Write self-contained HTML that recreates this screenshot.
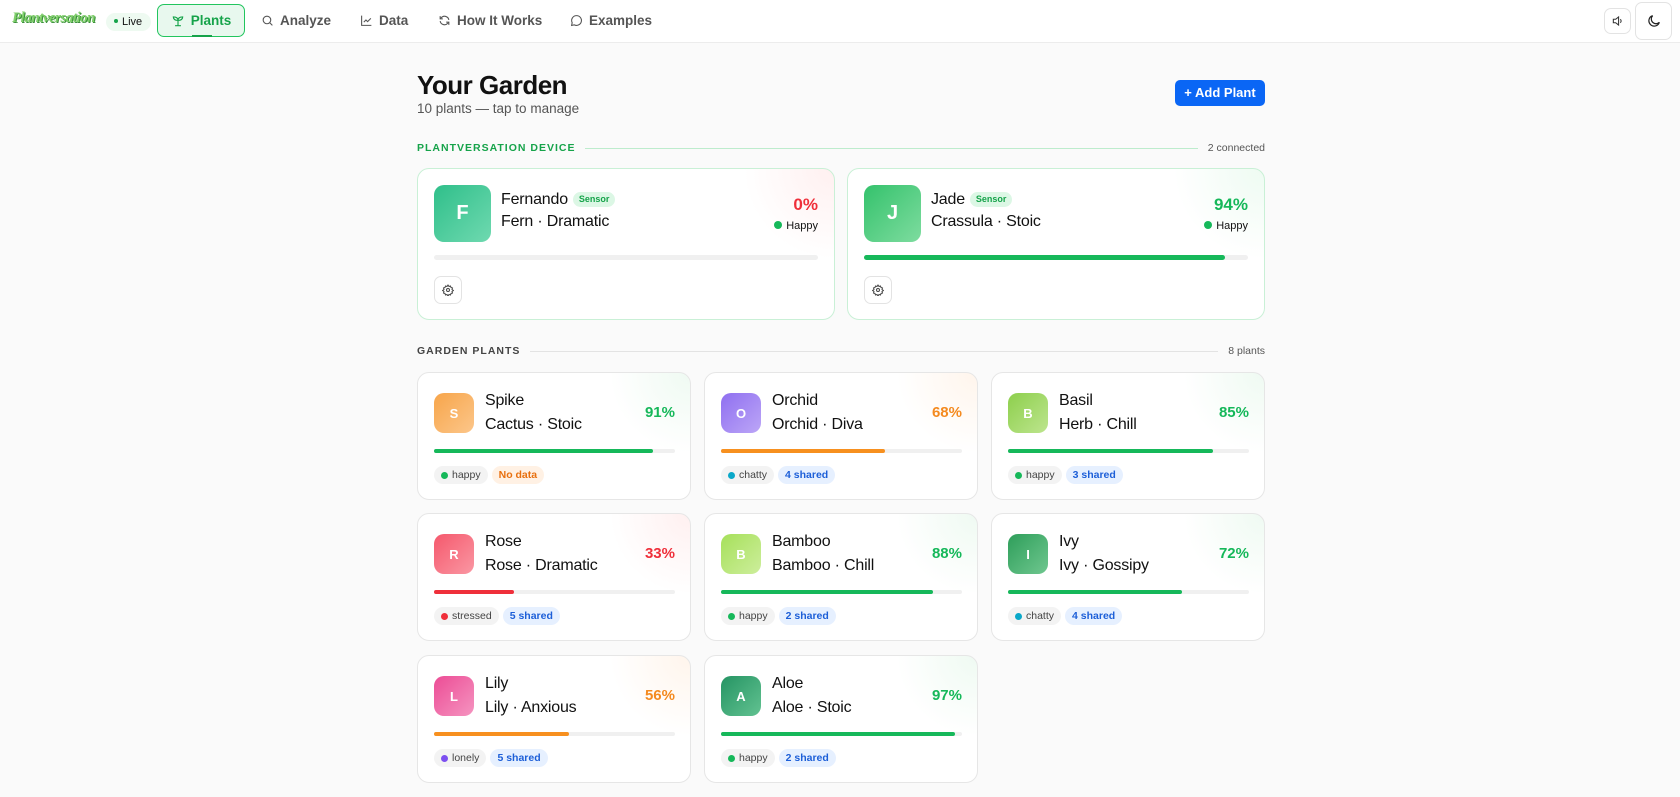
<!DOCTYPE html>
<html><head><meta charset="utf-8"><style>
*{box-sizing:border-box;margin:0;padding:0}
body{width:1680px;height:797px;overflow:hidden;background:#fafafa;font-family:"Liberation Sans",Arial,sans-serif;color:#111;position:relative}
.nav{position:absolute;left:0;top:0;width:1680px;height:43px;background:#fff;border-bottom:1px solid #ececec}
.abs{position:absolute}
.logo{left:12px;top:10px;font:italic bold 15px "Liberation Serif",serif;color:#7fcf6a;text-shadow:1px 1px 0 #3a8f3a;letter-spacing:-0.5px}
.live{left:106px;top:13px;width:45px;height:18px;border-radius:9px;background:#eefaf1;font-size:11px;color:#111;line-height:18px;padding-left:8px}
.live:before{content:"";display:inline-block;width:4px;height:4px;border-radius:50%;background:#16a34a;margin-right:4px;vertical-align:middle;position:relative;top:-1px}
.tab{top:4px;height:33px;line-height:32px;font-size:13.5px;font-weight:bold;color:#555;display:flex;align-items:center;gap:6px}
.plants{left:157px;width:88px;background:#e8f8ee;border:1.5px solid #22c55e;border-radius:7px;color:#16a34a;justify-content:center}
.plants:after{content:"";position:absolute;left:34px;bottom:-1px;width:20px;height:2px;background:#16a34a}
.ibtn{background:#fff;border:1px solid #e3e3e3;border-radius:7px;display:flex;align-items:center;justify-content:center}
h1{position:absolute;left:417px;top:70px;font-size:26px;font-weight:bold;letter-spacing:-0.5px}
.sub{left:417px;top:101px;font-size:13.5px;color:#555}
.add{left:1175px;top:80px;width:90px;height:26px;background:#0a66f5;color:#fff;border-radius:5px;font-size:13px;font-weight:bold;line-height:26px;text-align:center}
.sec{left:417px;width:848px;height:14px;display:flex;align-items:center;gap:10px;font-size:10.5px}
.sec b{letter-spacing:1px}
.sec i{flex:1;height:1px;background:#bdeccd}
.card{position:absolute;background:#fff;border:1px solid #e6e6e6;border-radius:12px;overflow:hidden}
.dev{border-color:#c9f0d6;height:152px;width:418px;top:168px}
.av{position:absolute;color:#fff;font-weight:bold;display:flex;align-items:center;justify-content:center;border-radius:10px}
.nm{position:absolute;font-size:16px;line-height:22px;letter-spacing:-0.2px}
.pct{position:absolute;font-weight:bold;font-size:15px;text-align:right}
.bar{position:absolute;height:5px;border-radius:3px;background:#f0f0f0}
.bar span{display:block;height:5px;border-radius:3px}
.tag{display:inline-block;height:18px;line-height:18px;border-radius:9px;font-size:10.5px;padding:0 7px;margin-right:4px}
.tg{background:#f3f3f3;color:#444}
.tg:before{content:"";display:inline-block;width:7px;height:7px;border-radius:50%;background:var(--c);margin-right:4px;vertical-align:-0.5px}
.tb{background:#e6f0ff;color:#1d5fd8;font-weight:bold}
.to{background:#fff1e4;color:#e8700f;font-weight:bold}
.sensor{display:inline-block;font-size:9px;line-height:11px;font-weight:bold;background:#dcf7e5;color:#16a34a;border-radius:8px;padding:2px 6px;vertical-align:2px;margin-left:5px;letter-spacing:0}
.gc{width:274px;height:128px}
</style></head><body>
<div class="nav">
 <div class="abs logo">Plantversation</div>
 <div class="abs live">Live</div>
 <div class="abs tab plants"><svg width="14" height="14" viewBox="0 0 24 24" fill="none" stroke="#16a34a" stroke-width="2"><path d="M7 20h10M12 20V11M12 11C12 7 9 5 4 5c0 4 3 6 8 6zM12 11c0-4 3-6 8-6 0 4-3 6-8 6"/></svg>Plants</div>
 <div class="abs tab" style="left:261px"><svg width="13" height="13" viewBox="0 0 24 24" fill="none" stroke="#555" stroke-width="2"><circle cx="11" cy="11" r="7"/><path d="M16 16l5 5"/></svg>Analyze</div>
 <div class="abs tab" style="left:360px"><svg width="13" height="13" viewBox="0 0 24 24" fill="none" stroke="#555" stroke-width="2"><path d="M3 3v18h18M7 15l4-4 3 3 6-6"/></svg>Data</div>
 <div class="abs tab" style="left:438px"><svg width="13" height="13" viewBox="0 0 24 24" fill="none" stroke="#555" stroke-width="2"><path d="M20 11a8 8 0 0 0-14-4L4 9M4 13a8 8 0 0 0 14 4l2-2M4 4v5h5M20 20v-5h-5"/></svg>How It Works</div>
 <div class="abs tab" style="left:570px"><svg width="13" height="13" viewBox="0 0 24 24" fill="none" stroke="#555" stroke-width="2"><path d="M12 3a9 9 0 0 0-8 13l-1 5 5-1A9 9 0 1 0 12 3z"/></svg>Examples</div>
 <div class="abs ibtn" style="left:1604px;top:8px;width:27px;height:26px"><svg width="14" height="14" viewBox="0 0 24 24" fill="none" stroke="#333" stroke-width="1.8"><path d="M4 9h4l5-4v14l-5-4H4zM16 9a4 4 0 0 1 0 6"/></svg></div>
 <div class="abs ibtn" style="left:1635px;top:2px;width:37px;height:38px"><svg width="16" height="16" viewBox="0 0 24 24" fill="none" stroke="#222" stroke-width="1.8"><path d="M20 14A8 8 0 1 1 10 4a6 6 0 0 0 10 10z"/></svg></div>
</div>

<h1>Your Garden</h1>
<div class="abs sub">10 plants — tap to manage</div>
<div class="abs add">+ Add Plant</div>

<div class="abs sec" style="top:141px"><b style="color:#16a34a">PLANTVERSATION DEVICE</b><i></i><span style="color:#555">2 connected</span></div>

<div class="card dev" style="left:417px;background:radial-gradient(circle at 100% 0,#fff0f0,#fff 90px)">
 <div class="av" style="left:16px;top:16px;width:57px;height:57px;font-size:20px;background:linear-gradient(135deg,#2fbf8a,#6fd9b0)">F</div>
 <div class="nm" style="left:83px;top:20px">Fernando<span class="sensor">Sensor</span><br>Fern · Dramatic</div>
 <div class="pct" style="right:16px;top:26px;font-size:17px;color:#ef2f3a">0%</div>
 <div class="abs" style="right:16px;top:51px;font-size:11px"><span style="display:inline-block;width:8px;height:8px;border-radius:50%;background:#16b85a;margin-right:4px"></span>Happy</div>
 <div class="bar" style="left:16px;right:16px;top:86px"></div>
 <div class="abs ibtn" style="left:16px;top:107px;width:28px;height:28px"><svg width="12" height="12" viewBox="0 0 24 24" fill="none" stroke="#444" stroke-width="2"><circle cx="12" cy="12" r="3"/><path d="M12 2l2 3 3-1 1 3 3 1-1 3 3 2-3 2 1 3-3 1-1 3-3-1-2 3-2-3-3 1-1-3-3-1 1-3-3-2 3-2-1-3 3-1 1-3 3 1z"/></svg></div>
</div>
<div class="card dev" style="left:847px;background:radial-gradient(circle at 100% 0,#eefbf2,#fff 90px)">
 <div class="av" style="left:16px;top:16px;width:57px;height:57px;font-size:20px;background:linear-gradient(135deg,#34c26c,#7edc9f)">J</div>
 <div class="nm" style="left:83px;top:20px">Jade<span class="sensor">Sensor</span><br>Crassula · Stoic</div>
 <div class="pct" style="right:16px;top:26px;font-size:17px;color:#16b85a">94%</div>
 <div class="abs" style="right:16px;top:51px;font-size:11px"><span style="display:inline-block;width:8px;height:8px;border-radius:50%;background:#16b85a;margin-right:4px"></span>Happy</div>
 <div class="bar" style="left:16px;right:16px;top:86px"><span style="width:94%;background:#16b85a"></span></div>
 <div class="abs ibtn" style="left:16px;top:107px;width:28px;height:28px"><svg width="12" height="12" viewBox="0 0 24 24" fill="none" stroke="#444" stroke-width="2"><circle cx="12" cy="12" r="3"/><path d="M12 2l2 3 3-1 1 3 3 1-1 3 3 2-3 2 1 3-3 1-1 3-3-1-2 3-2-3-3 1-1-3-3-1 1-3-3-2 3-2-1-3 3-1 1-3 3 1z"/></svg></div>
</div>

<div class="abs sec" style="top:344px"><b style="color:#444">GARDEN PLANTS</b><i style="background:#e3e3e3"></i><span style="color:#555">8 plants</span></div>

<div class="card gc" style="left:417px;top:372px;background:radial-gradient(circle at 100% 0,#effaf2,#fff 80px)">
 <div class="av" style="left:16px;top:20px;width:40px;height:40px;font-size:13px;background:linear-gradient(135deg,#f7a54a,#fcc68a)">S</div>
 <div class="nm" style="left:67px;top:16px;line-height:24px">Spike<br>Cactus · Stoic</div>
 <div class="pct" style="right:15px;top:31px;color:#16b85a">91%</div>
 <div class="bar" style="left:16px;right:15px;top:76px;height:4px"><span style="width:91%;height:4px;background:#16b85a"></span></div>
 <div class="abs" style="left:16px;top:92px"><span class="tag tg" style="--c:#16b85a">happy</span><span class="tag to">No data</span></div>
</div>
<div class="card gc" style="left:704px;top:372px;background:radial-gradient(circle at 100% 0,#fff5ec,#fff 80px)">
 <div class="av" style="left:16px;top:20px;width:40px;height:40px;font-size:13px;background:linear-gradient(135deg,#8f6ff0,#bca6f7)">O</div>
 <div class="nm" style="left:67px;top:16px;line-height:24px">Orchid<br>Orchid · Diva</div>
 <div class="pct" style="right:15px;top:31px;color:#f48a1f">68%</div>
 <div class="bar" style="left:16px;right:15px;top:76px;height:4px"><span style="width:68%;height:4px;background:#f7901f"></span></div>
 <div class="abs" style="left:16px;top:92px"><span class="tag tg" style="--c:#0aa8c9">chatty</span><span class="tag tb">4 shared</span></div>
</div>
<div class="card gc" style="left:991px;top:372px;background:radial-gradient(circle at 100% 0,#effaf2,#fff 80px)">
 <div class="av" style="left:16px;top:20px;width:40px;height:40px;font-size:13px;background:linear-gradient(135deg,#8dcf4c,#bde58e)">B</div>
 <div class="nm" style="left:67px;top:16px;line-height:24px">Basil<br>Herb · Chill</div>
 <div class="pct" style="right:15px;top:31px;color:#16b85a">85%</div>
 <div class="bar" style="left:16px;right:15px;top:76px;height:4px"><span style="width:85%;height:4px;background:#16b85a"></span></div>
 <div class="abs" style="left:16px;top:92px"><span class="tag tg" style="--c:#16b85a">happy</span><span class="tag tb">3 shared</span></div>
</div>

<div class="card gc" style="left:417px;top:513px;background:radial-gradient(circle at 100% 0,#fff0f0,#fff 80px)">
 <div class="av" style="left:16px;top:20px;width:40px;height:40px;font-size:13px;background:linear-gradient(135deg,#f5586c,#fa97a3)">R</div>
 <div class="nm" style="left:67px;top:16px;line-height:24px">Rose<br>Rose · Dramatic</div>
 <div class="pct" style="right:15px;top:31px;color:#ef2f3a">33%</div>
 <div class="bar" style="left:16px;right:15px;top:76px;height:4px"><span style="width:33%;height:4px;background:#ef2f3a"></span></div>
 <div class="abs" style="left:16px;top:92px"><span class="tag tg" style="--c:#ef2f3a">stressed</span><span class="tag tb">5 shared</span></div>
</div>
<div class="card gc" style="left:704px;top:513px;background:radial-gradient(circle at 100% 0,#effaf2,#fff 80px)">
 <div class="av" style="left:16px;top:20px;width:40px;height:40px;font-size:13px;background:linear-gradient(135deg,#a6e05a,#cdee9c)">B</div>
 <div class="nm" style="left:67px;top:16px;line-height:24px">Bamboo<br>Bamboo · Chill</div>
 <div class="pct" style="right:15px;top:31px;color:#16b85a">88%</div>
 <div class="bar" style="left:16px;right:15px;top:76px;height:4px"><span style="width:88%;height:4px;background:#16b85a"></span></div>
 <div class="abs" style="left:16px;top:92px"><span class="tag tg" style="--c:#16b85a">happy</span><span class="tag tb">2 shared</span></div>
</div>
<div class="card gc" style="left:991px;top:513px;background:radial-gradient(circle at 100% 0,#effaf2,#fff 80px)">
 <div class="av" style="left:16px;top:20px;width:40px;height:40px;font-size:13px;background:linear-gradient(135deg,#2e9e5a,#6fc78f)">I</div>
 <div class="nm" style="left:67px;top:16px;line-height:24px">Ivy<br>Ivy · Gossipy</div>
 <div class="pct" style="right:15px;top:31px;color:#16b85a">72%</div>
 <div class="bar" style="left:16px;right:15px;top:76px;height:4px"><span style="width:72%;height:4px;background:#16b85a"></span></div>
 <div class="abs" style="left:16px;top:92px"><span class="tag tg" style="--c:#0aa8c9">chatty</span><span class="tag tb">4 shared</span></div>
</div>

<div class="card gc" style="left:417px;top:655px;background:radial-gradient(circle at 100% 0,#fff5ec,#fff 80px)">
 <div class="av" style="left:16px;top:20px;width:40px;height:40px;font-size:13px;background:linear-gradient(135deg,#ec4c95,#f594c0)">L</div>
 <div class="nm" style="left:67px;top:16px;line-height:24px">Lily<br>Lily · Anxious</div>
 <div class="pct" style="right:15px;top:31px;color:#f48a1f">56%</div>
 <div class="bar" style="left:16px;right:15px;top:76px;height:4px"><span style="width:56%;height:4px;background:#f7901f"></span></div>
 <div class="abs" style="left:16px;top:92px"><span class="tag tg" style="--c:#7c4ff0">lonely</span><span class="tag tb">5 shared</span></div>
</div>
<div class="card gc" style="left:704px;top:655px;background:radial-gradient(circle at 100% 0,#effaf2,#fff 80px)">
 <div class="av" style="left:16px;top:20px;width:40px;height:40px;font-size:13px;background:linear-gradient(135deg,#259463,#62c291)">A</div>
 <div class="nm" style="left:67px;top:16px;line-height:24px">Aloe<br>Aloe · Stoic</div>
 <div class="pct" style="right:15px;top:31px;color:#16b85a">97%</div>
 <div class="bar" style="left:16px;right:15px;top:76px;height:4px"><span style="width:97%;height:4px;background:#16b85a"></span></div>
 <div class="abs" style="left:16px;top:92px"><span class="tag tg" style="--c:#16b85a">happy</span><span class="tag tb">2 shared</span></div>
</div>
</body></html>
